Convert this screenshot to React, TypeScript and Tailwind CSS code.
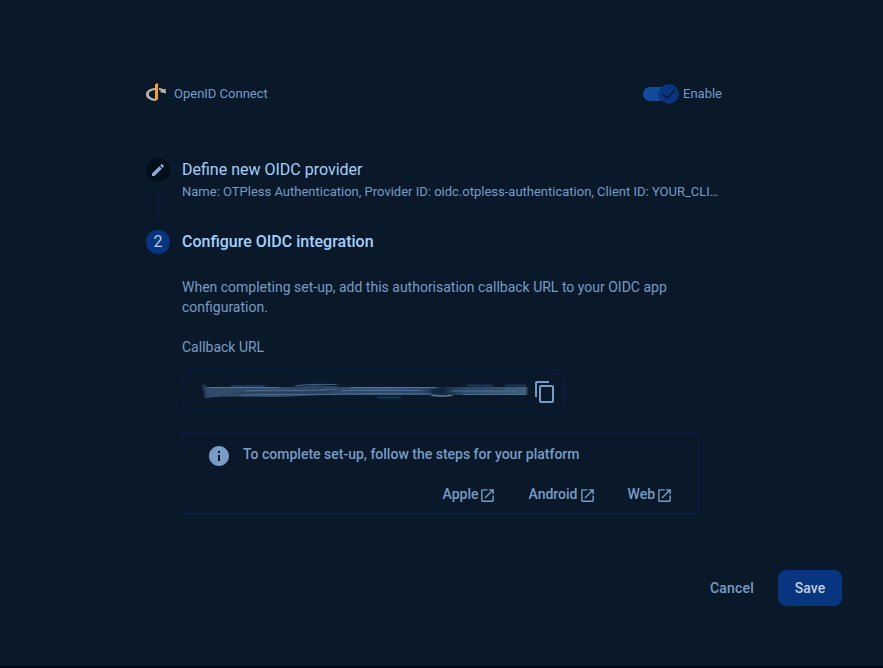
import React from "react";
import { MdCheck, MdContentCopy, MdEdit, MdInfo, MdOpenInNew } from "react-icons/md";

function OpenIdLogo() {
  return (
    <svg width="20" height="18" viewBox="0 0 20 18" className="shrink-0">
      <path d="M9 5C3.8 5.4 0 8 0 11.4s3.9 6 9 6.5v-2.1c-3.6-.5-6.2-2.2-6.2-4.5S5.4 7.2 9 6.9z" fill="#b8b6b1" />
      <path d="M13 5c1.9.2 3.7.8 5 1.6l1.6-1 .4 4.8-6.4-1.4 1.7-1c-.7-.5-1.4-.7-2.3-.9z" fill="#b8b6b1" />
      <path d="M9 1.2 12 0v16.5L9 18z" fill="#f9a02b" />
    </svg>
  );
}

function Toggle() {
  return (
    <div className="relative h-5 w-9" role="switch" aria-checked="true">
      <div className="mt-[3px] h-3.5 w-[34px] rounded-full bg-[#124b9b]" />
      <div className="absolute top-0 right-0 flex size-5 items-center justify-center rounded-full bg-[#08357f] text-[#071a35] shadow-[0_1px_2px_rgba(0,8,24,0.5)]">
        <MdCheck size={18} />
      </div>
    </div>
  );
}

function RedactedUrl() {
  return (
    <svg width="328" height="20" viewBox="0 0 328 20" fill="none" className="shrink-0">
      <defs>
        <filter id="soft" x="-5%" y="-50%" width="110%" height="200%">
          <feGaussianBlur stdDeviation="1.2 0.4" />
        </filter>
        <linearGradient id="smear" x1="0" x2="1">
          <stop offset="0" stopColor="#304a68" />
          <stop offset=".2" stopColor="#304d6d" />
          <stop offset=".36" stopColor="#28435f" />
          <stop offset=".55" stopColor="#37567a" />
          <stop offset=".68" stopColor="#2c4869" />
          <stop offset=".74" stopColor="#142b45" />
          <stop offset=".81" stopColor="#2f4c6a" />
          <stop offset="1" stopColor="#405e7d" />
        </linearGradient>
      </defs>
      <g filter="url(#soft)">
        <path d="M2 3l4 3h88l20-2 28 2h184v8H122l-40 2-60-.5L4 17z" fill="url(#smear)" />
        <path d="M30 5h34M266 4.5h26M304 4.5h21" stroke="#1f3854" strokeWidth="2" />
        <path d="M94 5c10-1.8 26-2 42-1.200" stroke="#46658a" />
        <path d="M2 3l3 12" stroke="#243a62" strokeWidth="1.500" />
        <path d="M8 6.500h70M150 6.500h85" stroke="#527298" />
        <path d="M45 10c35-2 60 1 90-2M140 9.500h80M250 10h65" stroke="#4b6b91" />
        <path d="M30 12.500c30-1 60 0 100-2" stroke="#253f5d" strokeWidth="1.300" />
        <path d="M150 11h76M252 8h50" stroke="#26415f" />
        <path d="M40 14c50-1 85 0 105-1h85M262 13.500h62" stroke="#4c6d90" />
        <path d="M176 16.500h24" stroke="#1d3555" strokeWidth="2" />
        <path d="M230 10h14" stroke="#102540" strokeWidth="4" />
        <path d="M231 14.500c7 .8 13 .8 20 0" stroke="#91abc0" />
      </g>
    </svg>
  );
}

const platforms = ["Apple", "Android", "Web"];

export default function App() {
  return (
    <main className="flex h-[668px] w-[883px] flex-col border-b-2 border-[#020914] bg-[#0a1929] pt-20 text-[#789bc5] [font-family:Roboto,sans-serif]">
      <header className="ml-[146px] flex h-7 w-[576px] items-center justify-between text-[13px] leading-5">
        <div className="flex items-center gap-2">
          <div className="-mt-1"><OpenIdLogo /></div>
          <span>OpenID Connect</span>
        </div>
        <div className="flex items-center gap-1">
          <Toggle />
          <span>Enable</span>
        </div>
      </header>

      <section className="mt-[50px] ml-[146px] flex h-[72px] w-[576px] gap-3">
        <div className="flex w-6 flex-col items-center">
          <div className="flex size-6 shrink-0 items-center justify-center rounded-full bg-[#03101c] text-[#8ba9d2]">
            <MdEdit size={16} />
          </div>
          <div className="mt-2 h-8 w-px bg-[#082048]" />
        </div>
        <div className="min-w-0 flex-1">
          <h2 className="text-base leading-6 text-[#a4cfff]">Define new OIDC provider</h2>
          <p className="text-[13px] leading-5 whitespace-nowrap">
            Name: OTPless Authentication, Provider ID: oidc.otpless-authentication, Client ID: YOUR_CLI…
          </p>
        </div>
      </section>

      <section className="ml-[146px] flex w-[576px] gap-3">
        <div className="flex size-6 shrink-0 items-center justify-center rounded-full bg-[#08357f] text-base text-[#b9c8dc]">2</div>
        <div className="w-[517px] text-sm leading-5">
          <h2 className="text-base leading-6 font-medium text-[#a4cfff]">Configure OIDC integration</h2>
          <p className="mt-[23px]">
            When completing set-up, add this authorisation callback URL to your OIDC app configuration.
          </p>
          <p className="mt-5">Callback URL</p>
          <div className="mt-[13px] flex h-[42px] w-[383px] items-center justify-between rounded-lg border border-[#081f42] pr-[7px] pl-[18px]">
            <RedactedUrl />
            <button aria-label="Copy callback URL" className="mt-0.5 shrink-0">
              <MdContentCopy size={24} />
            </button>
          </div>
          <div className="mt-5 h-[82px] border border-[#081f42] pr-[25px] pl-6 font-medium">
            <div className="flex items-start gap-3 pt-[11px]">
              <MdInfo size={24} />
              <p>To complete set-up, follow the steps for your platform</p>
            </div>
            <div className="mt-4 flex justify-end gap-8">
              {platforms.map((name) => (
                <a key={name} href="#" className="flex items-center gap-px">
                  {name}
                  <MdOpenInNew size={17} className="mt-0.5" />
                </a>
              ))}
            </div>
          </div>
        </div>
      </section>

      <footer className="mt-14 mr-[41px] flex justify-end gap-2 text-sm font-medium">
        <button className="h-9 px-4 tracking-[0.2px]">Cancel</button>
        <button className="h-9 w-16 rounded-lg bg-[#08357f] text-[#c5cedb]">Save</button>
      </footer>
    </main>
  );
}
